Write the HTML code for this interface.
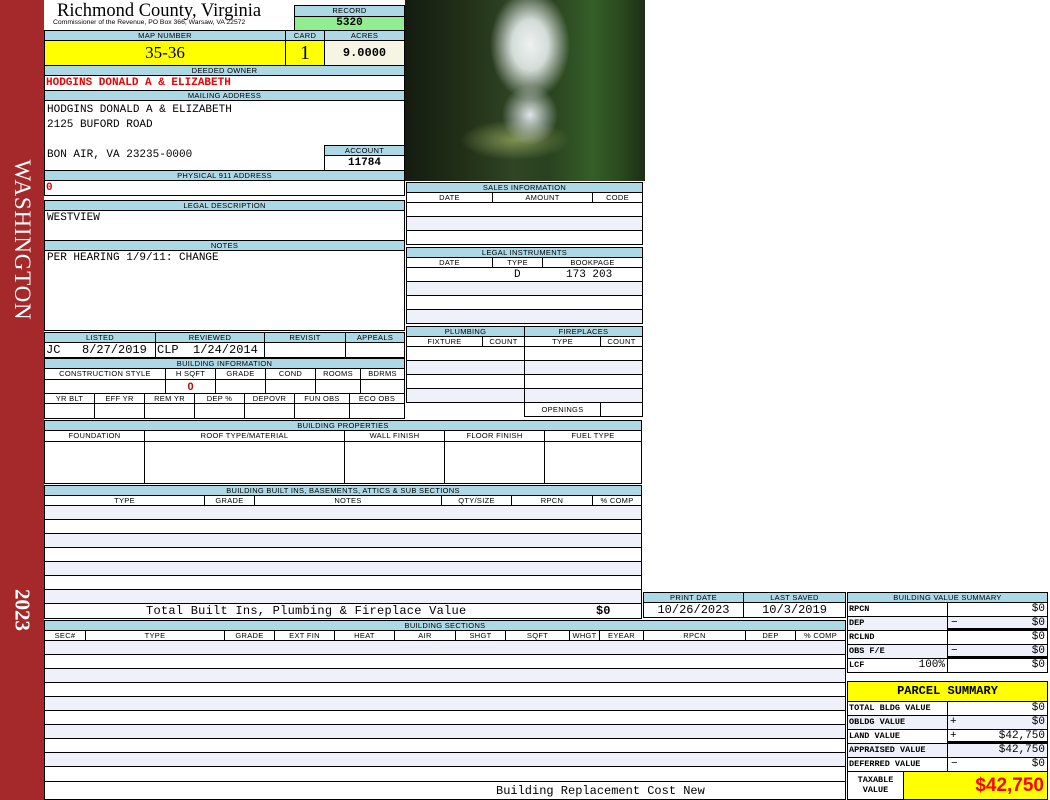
<!DOCTYPE html>
<html><head><meta charset="utf-8"><style>
*{margin:0;padding:0}
body{width:1050px;height:800px;position:relative;background:#fff;overflow:hidden;font-family:"Liberation Sans",sans-serif}
.a{position:absolute;box-sizing:border-box;border:1px solid #000;overflow:hidden;white-space:nowrap}
.h{background:#add8e6;font-size:7.5px;line-height:9px;text-align:center;letter-spacing:.3px;color:#000}
.s{font-size:7.5px;line-height:9px;text-align:center;letter-spacing:.3px;background:#fff}
.m{font-family:"Liberation Mono",monospace}
.l{background:#eef0fa}
.t{position:absolute;white-space:nowrap}
.r{text-align:right;padding-right:2px}
.lb{font-family:"Liberation Mono",monospace;font-size:8.5px;font-weight:bold;line-height:12px;padding-left:1px}
.v{font-family:"Liberation Mono",monospace;font-size:11px;line-height:12px;text-align:right;padding-right:2px}
</style></head><body>
<div class="t" style="left:0;top:0;width:44px;height:800px;background:#a5292a"></div>
<div class="t" style="left:22px;top:240px;transform:translate(-50%,-50%) rotate(90deg);color:#fff;font:23px 'Liberation Serif',serif;letter-spacing:0.8px">WASHINGTON</div>
<div class="t" style="left:22px;top:610px;transform:translate(-50%,-50%) rotate(90deg);color:#fff;font:bold 21px 'Liberation Serif',serif">2023</div>

<div class="t" style="left:57px;top:1px;font:18.5px 'Liberation Serif',serif">Richmond County, Virginia</div>
<div class="t" style="left:53px;top:19px;font-size:6.8px">Commissioner of the Revenue, PO Box 366, Warsaw, VA 22572</div>
<div class="a h" style="left:294px;top:5px;width:111px;height:12px">RECORD</div>
<div class="a m" style="left:294px;top:16px;width:111px;height:15px;background:#90ee90;font-size:11px;font-weight:bold;text-align:center;line-height:13px">5320</div>

<div class="a h" style="left:44px;top:30px;width:242px;height:11px">MAP NUMBER</div>
<div class="a h" style="left:285px;top:30px;width:40px;height:11px">CARD</div>
<div class="a h" style="left:324px;top:30px;width:81px;height:11px">ACRES</div>
<div class="a" style="left:44px;top:40px;width:242px;height:26px;background:#ffff00;font:17px/24px 'Liberation Serif',serif;text-align:center">35-36</div>
<div class="a" style="left:285px;top:40px;width:40px;height:26px;background:#ffff00;font:20px/24px 'Liberation Serif',serif;text-align:center">1</div>
<div class="a m" style="left:324px;top:40px;width:81px;height:26px;background:#f6f4e2;font-size:12px;font-weight:bold;line-height:24px;text-align:center">9.0000</div>

<div class="a h" style="left:44px;top:65px;width:361px;height:11px">DEEDED OWNER</div>
<div class="a m" style="left:44px;top:75px;width:361px;height:16px;color:#e00;font-weight:bold;font-size:11px;line-height:15px;padding-left:1px">HODGINS DONALD A &amp; ELIZABETH</div>
<div class="a h" style="left:44px;top:90px;width:361px;height:11px">MAILING ADDRESS</div>
<div class="a m" style="left:44px;top:100px;width:361px;height:71px;font-size:11px;line-height:15px;padding:2px 0 0 2px;white-space:pre">HODGINS DONALD A &amp; ELIZABETH
2125 BUFORD ROAD

BON AIR, VA 23235-0000</div>
<div class="a h" style="left:324px;top:145px;width:81px;height:11px">ACCOUNT</div>
<div class="a m" style="left:324px;top:155px;width:81px;height:16px;font-size:11px;font-weight:bold;text-align:center;line-height:15px;background:#fff">11784</div>
<div class="a h" style="left:44px;top:170px;width:361px;height:11px">PHYSICAL 911 ADDRESS</div>
<div class="a m" style="left:44px;top:180px;width:361px;height:16px;color:#e00;font-weight:bold;font-size:11px;line-height:15px;padding-left:1px">0</div>
<div class="a h" style="left:44px;top:200px;width:361px;height:11px">LEGAL DESCRIPTION</div>
<div class="a m" style="left:44px;top:210px;width:361px;height:31px;font-size:11px;line-height:15px;padding-left:2px">WESTVIEW</div>
<div class="a h" style="left:44px;top:240px;width:361px;height:11px">NOTES</div>
<div class="a m" style="left:44px;top:250px;width:361px;height:81px;font-size:11px;line-height:15px;padding-left:2px">PER HEARING 1/9/11: CHANGE</div>

<div class="a h" style="left:44px;top:332px;width:112px;height:11px">LISTED</div>
<div class="a h" style="left:155px;top:332px;width:110px;height:11px">REVIEWED</div>
<div class="a h" style="left:264px;top:332px;width:82px;height:11px">REVISIT</div>
<div class="a h" style="left:345px;top:332px;width:60px;height:11px">APPEALS</div>
<div class="a m" style="left:44px;top:342px;width:112px;height:16px;font-size:12px;line-height:14px;padding-left:1px;white-space:pre">JC   8/27/2019</div>
<div class="a m" style="left:155px;top:342px;width:110px;height:16px;font-size:12px;line-height:14px;padding-left:1px;white-space:pre">CLP  1/24/2014</div>
<div class="a" style="left:264px;top:342px;width:82px;height:16px"></div>
<div class="a" style="left:345px;top:342px;width:60px;height:16px"></div>

<div class="a h" style="left:44px;top:358px;width:361px;height:11px">BUILDING INFORMATION</div>
<div class="a s" style="left:44px;top:368px;width:122px;height:12px">CONSTRUCTION STYLE</div>
<div class="a s" style="left:165px;top:368px;width:51px;height:12px">H SQFT</div>
<div class="a s" style="left:215px;top:368px;width:51px;height:12px">GRADE</div>
<div class="a s" style="left:265px;top:368px;width:51px;height:12px">COND</div>
<div class="a s" style="left:315px;top:368px;width:46px;height:12px">ROOMS</div>
<div class="a s" style="left:360px;top:368px;width:45px;height:12px">BDRMS</div>
<div class="a" style="left:44px;top:379px;width:122px;height:15px"></div>
<div class="a" style="left:165px;top:379px;width:51px;height:15px;color:#c00;font-weight:bold;font-size:11px;text-align:center;line-height:14px">0</div>
<div class="a" style="left:215px;top:379px;width:51px;height:15px"></div>
<div class="a" style="left:265px;top:379px;width:51px;height:15px"></div>
<div class="a" style="left:315px;top:379px;width:46px;height:15px"></div>
<div class="a" style="left:360px;top:379px;width:45px;height:15px"></div>
<div class="a s" style="left:44px;top:393px;width:51px;height:11px">YR BLT</div>
<div class="a s" style="left:94px;top:393px;width:51px;height:11px">EFF YR</div>
<div class="a s" style="left:144px;top:393px;width:51px;height:11px">REM YR</div>
<div class="a s" style="left:194px;top:393px;width:51px;height:11px">DEP %</div>
<div class="a s" style="left:244px;top:393px;width:51px;height:11px">DEPOVR</div>
<div class="a s" style="left:294px;top:393px;width:56px;height:11px">FUN OBS</div>
<div class="a s" style="left:349px;top:393px;width:56px;height:11px">ECO OBS</div>
<div class="a" style="left:44px;top:403px;width:51px;height:16px"></div>
<div class="a" style="left:94px;top:403px;width:51px;height:16px"></div>
<div class="a" style="left:144px;top:403px;width:51px;height:16px"></div>
<div class="a" style="left:194px;top:403px;width:51px;height:16px"></div>
<div class="a" style="left:244px;top:403px;width:51px;height:16px"></div>
<div class="a" style="left:294px;top:403px;width:56px;height:16px"></div>
<div class="a" style="left:349px;top:403px;width:56px;height:16px"></div>

<!-- photo -->
<div class="t" style="left:405px;top:0;width:240px;height:181px;background:
radial-gradient(ellipse 40px 55px at 125px 45px,#eef2f2 0%,#d4dcd8 45%,rgba(90,110,80,0) 100%),
radial-gradient(ellipse 28px 30px at 125px 115px,#dfe6ea 0%,rgba(120,140,120,0) 100%),
radial-gradient(ellipse 55px 20px at 110px 140px,#7d9050 0%,rgba(60,80,40,0) 100%),
linear-gradient(90deg,#141c10 0%,#223018 25%,#2f4524 45%,#2a4220 60%,#355e28 78%,#2a4a1e 90%,#1c2e16 100%)"></div>

<!-- sales -->
<div class="a h" style="left:406px;top:182px;width:237px;height:11px">SALES INFORMATION</div>
<div class="a s" style="left:406px;top:192px;width:87px;height:11px">DATE</div>
<div class="a s" style="left:492px;top:192px;width:101px;height:11px">AMOUNT</div>
<div class="a s" style="left:592px;top:192px;width:51px;height:11px">CODE</div>
<div class="a" style="left:406px;top:202px;width:237px;height:15px"></div>
<div class="a l" style="left:406px;top:216px;width:237px;height:15px"></div>
<div class="a" style="left:406px;top:230px;width:237px;height:15px"></div>

<div class="a h" style="left:406px;top:247px;width:237px;height:11px">LEGAL INSTRUMENTS</div>
<div class="a s" style="left:406px;top:257px;width:87px;height:11px">DATE</div>
<div class="a s" style="left:492px;top:257px;width:51px;height:11px">TYPE</div>
<div class="a s" style="left:542px;top:257px;width:101px;height:11px">BOOKPAGE</div>
<div class="a m" style="left:406px;top:267px;width:237px;height:15px;font-size:11px;line-height:14px;white-space:pre"><span class="t" style="left:107px">D</span><span class="t" style="left:159px">173 203</span></div>
<div class="a l" style="left:406px;top:281px;width:237px;height:15px"></div>
<div class="a" style="left:406px;top:295px;width:237px;height:15px"></div>
<div class="a l" style="left:406px;top:309px;width:237px;height:15px"></div>

<div class="a h" style="left:406px;top:326px;width:119px;height:11px">PLUMBING</div>
<div class="a h" style="left:524px;top:326px;width:119px;height:11px">FIREPLACES</div>
<div class="a s" style="left:406px;top:336px;width:77px;height:11px">FIXTURE</div>
<div class="a s" style="left:482px;top:336px;width:43px;height:11px">COUNT</div>
<div class="a s" style="left:524px;top:336px;width:77px;height:11px">TYPE</div>
<div class="a s" style="left:600px;top:336px;width:43px;height:11px">COUNT</div>
<div class="a" style="left:406px;top:346px;width:119px;height:15px"></div>
<div class="a l" style="left:406px;top:360px;width:119px;height:15px"></div>
<div class="a" style="left:406px;top:374px;width:119px;height:15px"></div>
<div class="a l" style="left:406px;top:388px;width:119px;height:15px"></div>
<div class="a" style="left:524px;top:346px;width:119px;height:15px"></div>
<div class="a l" style="left:524px;top:360px;width:119px;height:15px"></div>
<div class="a" style="left:524px;top:374px;width:119px;height:15px"></div>
<div class="a l" style="left:524px;top:388px;width:119px;height:15px"></div>
<div class="a s" style="left:524px;top:402px;width:77px;height:15px;line-height:13px">OPENINGS</div>
<div class="a" style="left:600px;top:402px;width:43px;height:15px"></div>

<!-- building properties -->
<div class="a h" style="left:44px;top:420px;width:598px;height:11px">BUILDING PROPERTIES</div>
<div class="a s" style="left:44px;top:430px;width:101px;height:12px">FOUNDATION</div>
<div class="a s" style="left:144px;top:430px;width:201px;height:12px">ROOF TYPE/MATERIAL</div>
<div class="a s" style="left:344px;top:430px;width:101px;height:12px">WALL FINISH</div>
<div class="a s" style="left:444px;top:430px;width:101px;height:12px">FLOOR FINISH</div>
<div class="a s" style="left:544px;top:430px;width:98px;height:12px">FUEL TYPE</div>
<div class="a" style="left:44px;top:441px;width:101px;height:43px"></div>
<div class="a" style="left:144px;top:441px;width:201px;height:43px"></div>
<div class="a" style="left:344px;top:441px;width:101px;height:43px"></div>
<div class="a" style="left:444px;top:441px;width:101px;height:43px"></div>
<div class="a" style="left:544px;top:441px;width:98px;height:43px"></div>

<!-- built ins -->
<div class="a h" style="left:44px;top:485px;width:598px;height:11px">BUILDING BUILT INS, BASEMENTS, ATTICS &amp; SUB SECTIONS</div>
<div class="a s" style="left:44px;top:495px;width:161px;height:11px">TYPE</div>
<div class="a s" style="left:204px;top:495px;width:51px;height:11px">GRADE</div>
<div class="a s" style="left:254px;top:495px;width:188px;height:11px">NOTES</div>
<div class="a s" style="left:441px;top:495px;width:71px;height:11px">QTY/SIZE</div>
<div class="a s" style="left:511px;top:495px;width:82px;height:11px">RPCN</div>
<div class="a s" style="left:592px;top:495px;width:50px;height:11px">% COMP</div>
<div class="a l" style="left:44px;top:505px;width:598px;height:15px"></div>
<div class="a" style="left:44px;top:519px;width:598px;height:15px"></div>
<div class="a l" style="left:44px;top:533px;width:598px;height:15px"></div>
<div class="a" style="left:44px;top:547px;width:598px;height:15px"></div>
<div class="a l" style="left:44px;top:561px;width:598px;height:15px"></div>
<div class="a" style="left:44px;top:575px;width:598px;height:15px"></div>
<div class="a l" style="left:44px;top:589px;width:598px;height:15px"></div>
<div class="a m" style="left:44px;top:603px;width:598px;height:16px;font-size:12px;line-height:15px"><span class="t" style="left:101px;letter-spacing:0.25px">Total Built Ins, Plumbing &amp; Fireplace Value</span><span class="t" style="left:551px;font-weight:bold">$0</span></div>

<div class="a h" style="left:643px;top:592px;width:101px;height:11px">PRINT DATE</div>
<div class="a h" style="left:743px;top:592px;width:103px;height:11px">LAST SAVED</div>
<div class="a m" style="left:643px;top:602px;width:101px;height:16px;font-size:12px;line-height:15px;text-align:center">10/26/2023</div>
<div class="a m" style="left:743px;top:602px;width:103px;height:16px;font-size:12px;line-height:15px;text-align:center">10/3/2019</div>

<!-- building sections -->
<div class="a h" style="left:44px;top:620px;width:802px;height:11px">BUILDING SECTIONS</div>
<div class="a s" style="left:44px;top:630px;width:42px;height:11px">SEC#</div>
<div class="a s" style="left:85px;top:630px;width:140px;height:11px">TYPE</div>
<div class="a s" style="left:224px;top:630px;width:51px;height:11px">GRADE</div>
<div class="a s" style="left:274px;top:630px;width:61px;height:11px">EXT FIN</div>
<div class="a s" style="left:334px;top:630px;width:61px;height:11px">HEAT</div>
<div class="a s" style="left:394px;top:630px;width:62px;height:11px">AIR</div>
<div class="a s" style="left:455px;top:630px;width:51px;height:11px">SHGT</div>
<div class="a s" style="left:505px;top:630px;width:65px;height:11px">SQFT</div>
<div class="a s" style="left:569px;top:630px;width:31px;height:11px">WHGT</div>
<div class="a s" style="left:599px;top:630px;width:45px;height:11px">EYEAR</div>
<div class="a s" style="left:643px;top:630px;width:103px;height:11px">RPCN</div>
<div class="a s" style="left:745px;top:630px;width:51px;height:11px">DEP</div>
<div class="a s" style="left:795px;top:630px;width:51px;height:11px">% COMP</div>
<div class="a l" style="left:44px;top:640px;width:802px;height:15px"></div>
<div class="a" style="left:44px;top:654px;width:802px;height:15px"></div>
<div class="a l" style="left:44px;top:668px;width:802px;height:15px"></div>
<div class="a" style="left:44px;top:682px;width:802px;height:15px"></div>
<div class="a l" style="left:44px;top:696px;width:802px;height:15px"></div>
<div class="a" style="left:44px;top:710px;width:802px;height:15px"></div>
<div class="a l" style="left:44px;top:724px;width:802px;height:15px"></div>
<div class="a" style="left:44px;top:738px;width:802px;height:15px"></div>
<div class="a l" style="left:44px;top:752px;width:802px;height:15px"></div>
<div class="a" style="left:44px;top:766px;width:802px;height:16px"></div>
<div class="a m" style="left:44px;top:781px;width:802px;height:19px;font-size:12px;line-height:19px"><span class="t" style="left:451px">Building Replacement Cost New</span></div>

<!-- building value summary -->
<div class="a h" style="left:847px;top:592px;width:201px;height:11px">BUILDING VALUE SUMMARY</div>
<div class="a lb" style="left:847px;top:602px;width:101px;height:15px">RPCN</div>
<div class="a v" style="left:947px;top:602px;width:101px;height:15px">$0</div>
<div class="a lb l" style="left:847px;top:616px;width:101px;height:15px">DEP</div>
<div class="a v l" style="left:947px;top:616px;width:101px;height:15px;border-bottom:3px solid #000"><span style="float:left;padding-left:3px">&minus;</span>$0</div>
<div class="a lb" style="left:847px;top:630px;width:101px;height:15px">RCLND</div>
<div class="a v" style="left:947px;top:630px;width:101px;height:15px">$0</div>
<div class="a lb l" style="left:847px;top:644px;width:101px;height:15px">OBS F/E</div>
<div class="a v l" style="left:947px;top:644px;width:101px;height:15px;border-bottom:3px solid #000"><span style="float:left;padding-left:3px">&minus;</span>$0</div>
<div class="a lb" style="left:847px;top:658px;width:101px;height:15px">LCF<span style="float:right;font-weight:normal;font-size:11px;padding-right:2px">100%</span></div>
<div class="a v" style="left:947px;top:658px;width:101px;height:15px">$0</div>

<!-- parcel summary -->
<div class="a m" style="left:847px;top:681px;width:201px;height:21px;background:#ffff00;font-weight:bold;font-size:12px;line-height:19px;text-align:center">PARCEL SUMMARY</div>
<div class="a lb" style="left:847px;top:701px;width:101px;height:15px">TOTAL BLDG VALUE</div>
<div class="a v" style="left:947px;top:701px;width:101px;height:15px">$0</div>
<div class="a lb l" style="left:847px;top:715px;width:101px;height:15px">OBLDG VALUE</div>
<div class="a v l" style="left:947px;top:715px;width:101px;height:15px"><span style="float:left;padding-left:2px">+</span>$0</div>
<div class="a lb" style="left:847px;top:729px;width:101px;height:15px">LAND VALUE</div>
<div class="a v" style="left:947px;top:729px;width:101px;height:15px;border-bottom:3px solid #000"><span style="float:left;padding-left:2px">+</span>$42,750</div>
<div class="a lb l" style="left:847px;top:743px;width:101px;height:15px">APPRAISED VALUE</div>
<div class="a v l" style="left:947px;top:743px;width:101px;height:15px">$42,750</div>
<div class="a lb" style="left:847px;top:757px;width:101px;height:15px">DEFERRED VALUE</div>
<div class="a v" style="left:947px;top:757px;width:101px;height:15px"><span style="float:left;padding-left:3px">&minus;</span>$0</div>
<div class="a m" style="left:847px;top:771px;width:57px;height:29px;font-size:8.5px;font-weight:bold;line-height:10px;text-align:center;padding-top:3px;white-space:normal">TAXABLE VALUE</div>
<div class="a" style="left:903px;top:771px;width:145px;height:29px;background:#ffff00;color:#f00;font-weight:bold;font-size:19px;line-height:27px;text-align:right;padding-right:3px">$42,750</div>
</body></html>
